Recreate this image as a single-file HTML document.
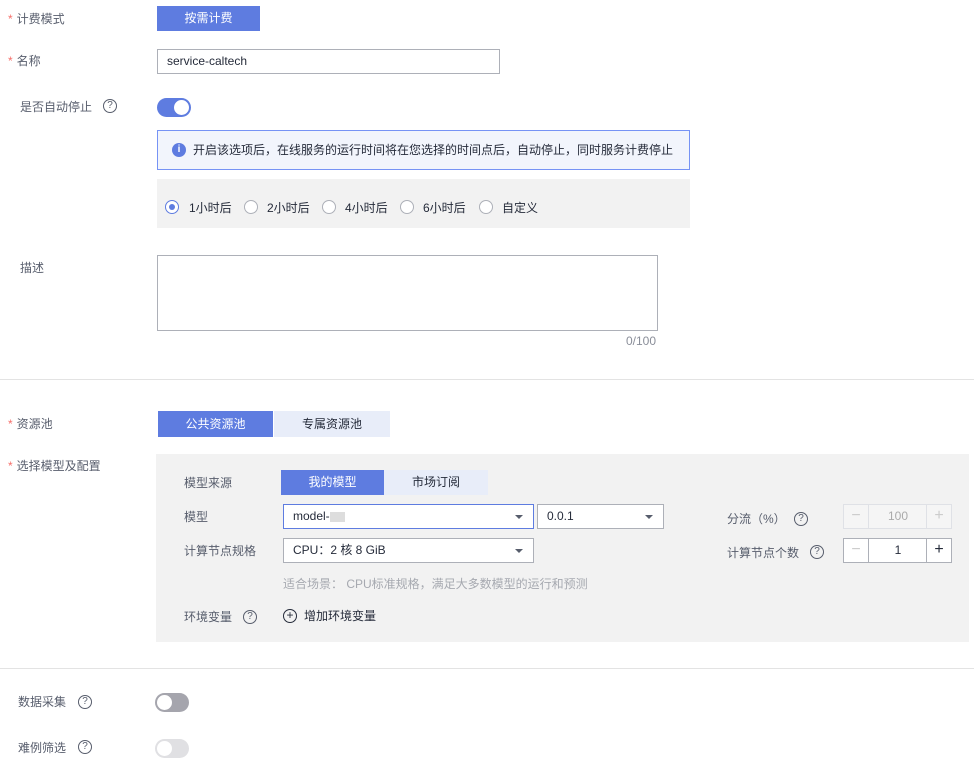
<!DOCTYPE html>
<html><head><meta charset="utf-8"><style>
*{box-sizing:border-box;margin:0;padding:0}
body{width:974px;height:763px;background:#fff;font-family:"Liberation Sans","Noto Sans CJK SC",sans-serif;font-size:12px;color:#252b3a;position:relative;overflow:hidden}
.a{position:absolute}
.lb{position:absolute;line-height:16px;color:#575d6c}
.st{color:#f66f6a;margin-right:4px}
.q{position:absolute;width:14px;height:14px;border:1px solid #575d6c;border-radius:50%;font-size:10px;line-height:12px;text-align:center;color:#575d6c}
.btn{position:absolute;text-align:center;color:#fff;background:#5e7ce0;font-size:12px}
.btn2{position:absolute;text-align:center;color:#252b3a;background:#e8edf9;font-size:12px}
.inp{position:absolute;border:1px solid #adb0b8;background:#fff;padding-left:9px;font-size:12px}
.arr{position:absolute;right:10px;top:10px;width:0;height:0;border-left:4px solid transparent;border-right:4px solid transparent;border-top:4px solid #575d6c}
.rad{position:absolute;width:14px;height:14px;border:1px solid #adb0b8;border-radius:50%;background:#fff}
.rt{position:absolute;line-height:16px}
.hr{position:absolute;left:0;width:974px;height:1px;background:#e3e3e3}
.stp{position:absolute;border:1px solid #adb0b8;background:#fff}
.stp div{position:absolute;top:0;height:100%;text-align:center}
</style></head><body>
<div class="lb" style="left:8px;top:11px"><span class="st">*</span>计费模式</div>
<div class="btn" style="left:157px;top:6px;width:103px;height:25px;line-height:25px">按需计费</div>

<div class="lb" style="left:8px;top:53px"><span class="st">*</span>名称</div>
<div class="inp" style="left:157px;top:49px;width:343px;height:25px;line-height:23px">service-caltech</div>

<div class="lb" style="left:20px;top:99px">是否自动停止</div>
<div class="q" style="left:103px;top:99px">?</div>
<div class="a" style="left:157px;top:98px;width:34px;height:19px;border-radius:10px;background:#5e7ce0"><div class="a" style="right:2px;top:2px;width:15px;height:15px;border-radius:50%;background:#fff"></div></div>

<div class="a" style="left:157px;top:130px;width:533px;height:40px;border:1px solid #7693f5;background:#f2f5fc"></div>
<div class="a" style="left:172px;top:143px;width:14px;height:14px;border-radius:50%;background:#5e7ce0;color:#fff;font-size:10px;font-weight:bold;text-align:center;line-height:14px">i</div>
<div class="rt" style="left:193px;top:142px">开启该选项后，在线服务的运行时间将在您选择的时间点后，自动停止，同时服务计费停止</div>

<div class="a" style="left:157px;top:179px;width:533px;height:49px;background:#f2f2f2"></div>
<div class="rad" style="left:165px;top:200px;border-color:#5e7ce0"><div class="a" style="left:3px;top:3px;width:6px;height:6px;border-radius:50%;background:#5e7ce0"></div></div>
<div class="rt" style="left:189px;top:200px">1小时后</div>
<div class="rad" style="left:244px;top:200px"></div><div class="rt" style="left:267px;top:200px">2小时后</div>
<div class="rad" style="left:322px;top:200px"></div><div class="rt" style="left:345px;top:200px">4小时后</div>
<div class="rad" style="left:400px;top:200px"></div><div class="rt" style="left:423px;top:200px">6小时后</div>
<div class="rad" style="left:479px;top:200px"></div><div class="rt" style="left:502px;top:200px">自定义</div>

<div class="lb" style="left:20px;top:260px">描述</div>
<div class="a" style="left:157px;top:255px;width:501px;height:76px;border:1px solid #adb0b8"></div>
<div class="rt" style="left:626px;top:333px;color:#8a8e99">0/100</div>

<div class="hr" style="top:379px"></div>

<div class="lb" style="left:8px;top:416px"><span class="st">*</span>资源池</div>
<div class="btn" style="left:158px;top:411px;width:115px;height:26px;line-height:26px">公共资源池</div>
<div class="btn2" style="left:274px;top:411px;width:116px;height:26px;line-height:26px">专属资源池</div>

<div class="lb" style="left:8px;top:458px"><span class="st">*</span>选择模型及配置</div>
<div class="a" style="left:156px;top:454px;width:813px;height:188px;background:#f2f2f2"></div>
<div class="lb" style="left:184px;top:475px">模型来源</div>
<div class="btn" style="left:281px;top:470px;width:103px;height:25px;line-height:25px">我的模型</div>
<div class="btn2" style="left:384px;top:470px;width:104px;height:25px;line-height:25px">市场订阅</div>

<div class="lb" style="left:184px;top:509px">模型</div>
<div class="inp" style="left:283px;top:504px;width:251px;height:25px;line-height:23px;border-color:#5e7ce0">model-<span style="display:inline-block;width:15px;height:10px;background:#ddd;vertical-align:middle"></span><div class="arr"></div></div>
<div class="inp" style="left:537px;top:504px;width:127px;height:25px;line-height:23px">0.0.1<div class="arr"></div></div>
<div class="lb" style="left:727px;top:511px">分流（%）</div>
<div class="q" style="left:794px;top:512px">?</div>
<div class="stp" style="left:843px;top:504px;width:109px;height:25px;border-color:#dfe1e6;background:#f5f5f5">
<div style="left:0;width:25px;border-right:1px solid #dfe1e6;color:#ccc;font-size:16px;line-height:22px">−</div>
<div style="left:25px;width:58px;color:#aaa;line-height:23px">100</div>
<div style="right:0;width:25px;border-left:1px solid #dfe1e6;color:#ccc;font-size:16px;line-height:22px">+</div></div>

<div class="lb" style="left:184px;top:543px">计算节点规格</div>
<div class="inp" style="left:283px;top:538px;width:251px;height:25px;line-height:23px">CPU：2 核 8 GiB<div class="arr"></div></div>
<div class="lb" style="left:727px;top:545px">计算节点个数</div>
<div class="q" style="left:810px;top:545px">?</div>
<div class="stp" style="left:843px;top:538px;width:109px;height:25px">
<div style="left:0;width:25px;border-right:1px solid #adb0b8;color:#ccc;font-size:16px;line-height:22px">−</div>
<div style="left:25px;width:58px;line-height:23px">1</div>
<div style="right:0;width:25px;border-left:1px solid #adb0b8;color:#252b3a;font-size:16px;line-height:22px">+</div></div>

<div class="rt" style="left:283px;top:576px;color:#a6a9b0">适合场景： CPU标准规格，满足大多数模型的运行和预测</div>
<div class="lb" style="left:184px;top:609px">环境变量</div>
<div class="q" style="left:243px;top:610px">?</div>
<div class="q" style="left:283px;top:609px;font-size:12px;line-height:11px;color:#252b3a;border-color:#252b3a">+</div>
<div class="rt" style="left:304px;top:608px">增加环境变量</div>

<div class="hr" style="top:668px"></div>

<div class="lb" style="left:18px;top:694px">数据采集</div>
<div class="q" style="left:78px;top:695px">?</div>
<div class="a" style="left:155px;top:693px;width:34px;height:19px;border-radius:10px;background:#a5a5ad"><div class="a" style="left:2px;top:2px;width:15px;height:15px;border-radius:50%;background:#fff"></div></div>

<div class="lb" style="left:18px;top:740px">难例筛选</div>
<div class="q" style="left:78px;top:740px">?</div>
<div class="a" style="left:155px;top:739px;width:34px;height:19px;border-radius:10px;background:#e0e0e3"><div class="a" style="left:2px;top:2px;width:15px;height:15px;border-radius:50%;background:#fff"></div></div>
</body></html>
